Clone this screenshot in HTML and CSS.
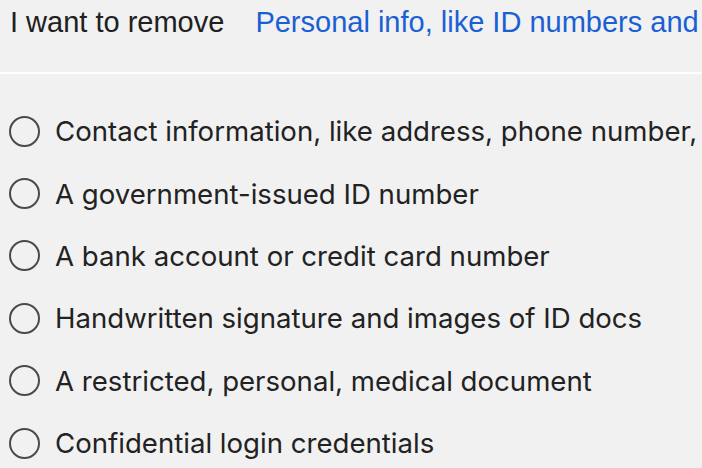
FILE: index.html
```html
<!DOCTYPE html>
<html lang="en">
<head>
<meta charset="utf-8">
<link rel="stylesheet" href="styles.css">
</head>
<body>
<div class="page">
  <div class="header">
    <span class="label">I want to remove</span>
    <span class="value">Personal info, like ID numbers and signatures</span>
  </div>
  <ul class="options">
    <li class="option"><span class="radio"></span><span class="text">Contact information, like address, phone number, email</span></li>
    <li class="option"><span class="radio"></span><span class="text">A government-issued ID number</span></li>
    <li class="option"><span class="radio"></span><span class="text">A bank account or credit card number</span></li>
    <li class="option"><span class="radio"></span><span class="text">Handwritten signature and images of ID docs</span></li>
    <li class="option"><span class="radio"></span><span class="text">A restricted, personal, medical document</span></li>
    <li class="option"><span class="radio"></span><span class="text">Confidential login credentials</span></li>
  </ul>
</div>
</body>
</html>
```
FILE: styles.css
```css
html, body {
  margin: 0;
  padding: 0;
  background: #f1f1f1;
}
.page {
  width: 702px;
  height: 468px;
  overflow: hidden;
}
.header {
  display: flex;
  align-items: baseline;
  gap: 31px;
  height: 74px;
  box-sizing: border-box;
  padding: 5px 0 0 10px;
  border-bottom: 2px solid #ffffff;
  font-family: "Liberation Sans", Arial, sans-serif;
  font-size: 29px;
  line-height: 34px;
  white-space: nowrap;
  overflow: hidden;
}
.label {
  color: #202020;
}
.value {
  color: #1b5fd4;
}
.options {
  list-style: none;
  margin: 0;
  padding: 26px 0 0 9px;
  display: flex;
  flex-direction: column;
}
.option {
  display: flex;
  align-items: center;
  gap: 15px;
  height: 62.4px;
  white-space: nowrap;
  font-family: Inter, Roboto, sans-serif;
  font-size: 27.6px;
  color: #222222;
}
.radio {
  flex: none;
  width: 31px;
  height: 31px;
  box-sizing: border-box;
  border: 2px solid #4a4a4a;
  border-radius: 50%;
}
.text {
  overflow: hidden;
}
```
